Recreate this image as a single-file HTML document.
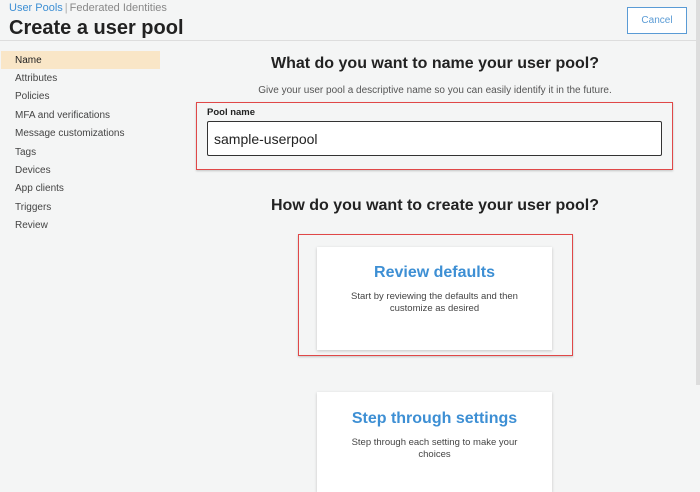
<!DOCTYPE html>
<html><head><style>
body{margin:0;width:700px;height:487px;background:#f4f5f5;font-family:"Liberation Sans",sans-serif;position:relative;overflow:hidden;color:#222}
.a{position:absolute}
.nav div{position:absolute;left:15px;font-size:10px;color:#444}
.card{position:absolute;left:317px;width:235px;background:#fff;box-shadow:0 1px 3px rgba(0,0,0,.2);text-align:center}
.card h3{margin:0;color:#3d8fd4;font-size:16px;font-weight:bold}
.card p{margin:0;font-size:9.5px;color:#444;line-height:12px}
</style></head><body>
<div class="a" style="left:9px;top:2px;font-size:11px;color:#3d8fd4">User Pools<span style="color:#aaa;margin:0 2px">|</span><span style="color:#888">Federated Identities</span></div>
<div class="a" style="left:9px;top:17px;font-size:20px;font-weight:bold;color:#222">Create a user pool</div>
<div class="a" style="left:627px;top:7px;width:58px;height:25px;border:1px solid #5a9bd5;background:#fff;color:#5a9bd5;font-size:10px;text-align:center;line-height:25px">Cancel</div>
<div class="a" style="left:0;top:40px;width:700px;height:1px;background:#ddd"></div>
<div class="a" style="left:1px;top:51px;width:159px;height:18px;background:#f9e6c7"></div>
<div class="nav">
<div style="top:55px;color:#222">Name</div>
<div style="top:73px">Attributes</div>
<div style="top:91px">Policies</div>
<div style="top:110px">MFA and verifications</div>
<div style="top:128px">Message customizations</div>
<div style="top:147px">Tags</div>
<div style="top:165px">Devices</div>
<div style="top:183px">App clients</div>
<div style="top:202px">Triggers</div>
<div style="top:220px">Review</div>
</div>
<div class="a" style="left:190px;width:490px;top:55px;text-align:center;font-size:16px;font-weight:bold">What do you want to name your user pool?</div>
<div class="a" style="left:190px;width:490px;top:85px;text-align:center;font-size:10px;color:#555">Give your user pool a descriptive name so you can easily identify it in the future.</div>
<div class="a" style="left:196px;top:102px;width:475px;height:66px;border:1.5px solid #e04848;box-shadow:0 1px 2px rgba(0,0,0,.2)"></div>
<div class="a" style="left:207px;top:107px;font-size:9.5px;font-weight:bold">Pool name</div>
<div class="a" style="left:207px;top:121px;height:35px;border:1px solid #333;border-radius:2px;background:#fff;font-size:14px;line-height:35px;padding-left:6px;box-sizing:border-box;width:455px">sample-userpool</div>
<div class="a" style="left:190px;width:490px;top:197px;text-align:center;font-size:16px;font-weight:bold">How do you want to create your user pool?</div>
<div class="a" style="left:298px;top:234px;width:273px;height:120px;border:1.5px solid #e04848;box-shadow:0 1px 2px rgba(0,0,0,.2)"></div>
<div class="card" style="top:247px;height:103px"><h3 style="margin-top:17px">Review defaults</h3><p style="margin-top:9px">Start by reviewing the defaults and then<br>customize as desired</p></div>
<div class="card" style="top:392px;height:100px"><h3 style="margin-top:18px">Step through settings</h3><p style="margin-top:9px">Step through each setting to make your<br>choices</p></div>
<div class="a" style="left:696px;top:0;width:4px;height:385px;background:#ddd"></div>
</body></html>
